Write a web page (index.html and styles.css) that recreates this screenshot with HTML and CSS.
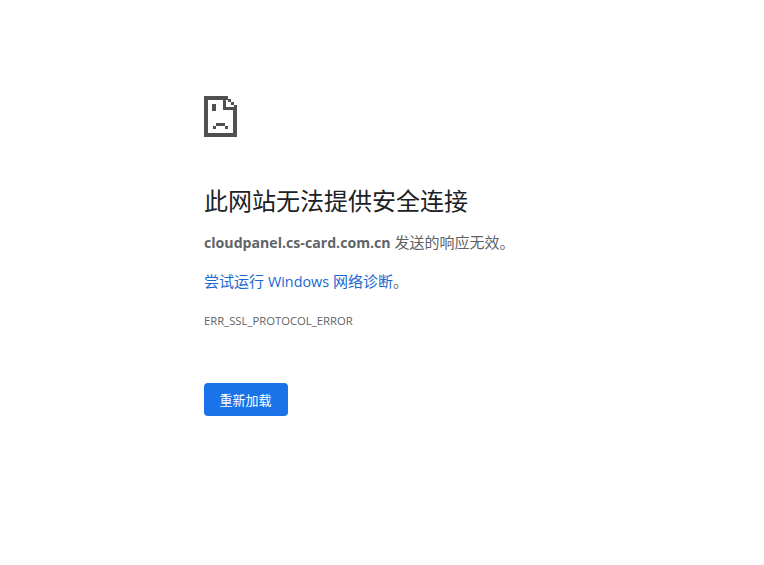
FILE: index.html
```html
<!DOCTYPE html>
<html lang="zh-CN">
<head>
    <meta charset="UTF-8">
    <meta name="viewport" content="width=device-width, initial-scale=1.0">
    <title>cloudpanel.cs-card.com.cn</title>
    <link rel="stylesheet" href="styles.css">
</head>
<body>
    <div class="interstitial">
        <div class="icon-wrap">
            <svg class="error-icon" width="33" height="41" viewBox="0 0 33 41" fill="#505050" shape-rendering="crispEdges" aria-hidden="true">
                <!-- page outline -->
                <path d="M0 0H24V4H4V37H29V14H33V41H0Z"/>
                <!-- folded corner -->
                <rect x="24" y="3" width="3" height="3"/>
                <rect x="27" y="6" width="3" height="3"/>
                <rect x="30" y="9" width="3" height="5"/>
                <rect x="19" y="4" width="3" height="10"/>
                <rect x="19" y="11" width="14" height="3"/>
                <!-- eye and mouth -->
                <rect x="8" y="8" width="4" height="7"/>
                <rect x="12" y="27" width="9" height="3"/>
                <rect x="9" y="30" width="3" height="3"/>
                <rect x="21" y="30" width="3" height="3"/>
            </svg>
        </div>
        <h1 class="heading">此网站无法提供安全连接</h1>
        <p class="summary"><strong>cloudpanel.cs-card.com.cn</strong> 发送的响应无效。</p>
        <p class="suggest"><a href="#">尝试运行 <span class="latin">Windows</span> 网络诊断</a>。</p>
        <div class="error-code">ERR_SSL_PROTOCOL_ERROR</div>
        <button type="button" class="reload-btn">重新加载</button>
    </div>
</body>
</html>
```

FILE: styles.css
```css
body {
    margin: 0;
    background: #fff;
    color: #5f6368;
    font-family: 'Open Sans', 'Noto Sans CJK SC', sans-serif;
    font-size: 15px;
}

.interstitial {
    width: 356px;
    margin: 0 auto;
    padding-top: 96px;
}

.icon-wrap {
    height: 41px;
}

.error-icon {
    display: block;
}

.heading {
    margin: 47px 0 0;
    color: #202124;
    font-size: 24px;
    font-weight: 400;
    line-height: 34px;
}

.summary {
    margin: 12px 0 0;
    line-height: 24px;
}

.summary strong {
    font-size: 14.15px;
    font-weight: 700;
}

.suggest {
    margin: 14px 0 0;
    line-height: 24px;
}

.suggest a {
    color: #1a67d2;
    text-decoration: none;
}

.latin {
    font-size: 14.4px;
}

.error-code {
    margin-top: 19px;
    font-size: 11.3px;
    line-height: 16px;
}

.reload-btn {
    display: block;
    margin-top: 54px;
    width: 84px;
    height: 33px;
    padding: 0 1px 1px 0;
    border: none;
    border-radius: 4px;
    background: #1a73e8;
    color: #fff;
    font-family: inherit;
    font-size: 13px;
}
```
